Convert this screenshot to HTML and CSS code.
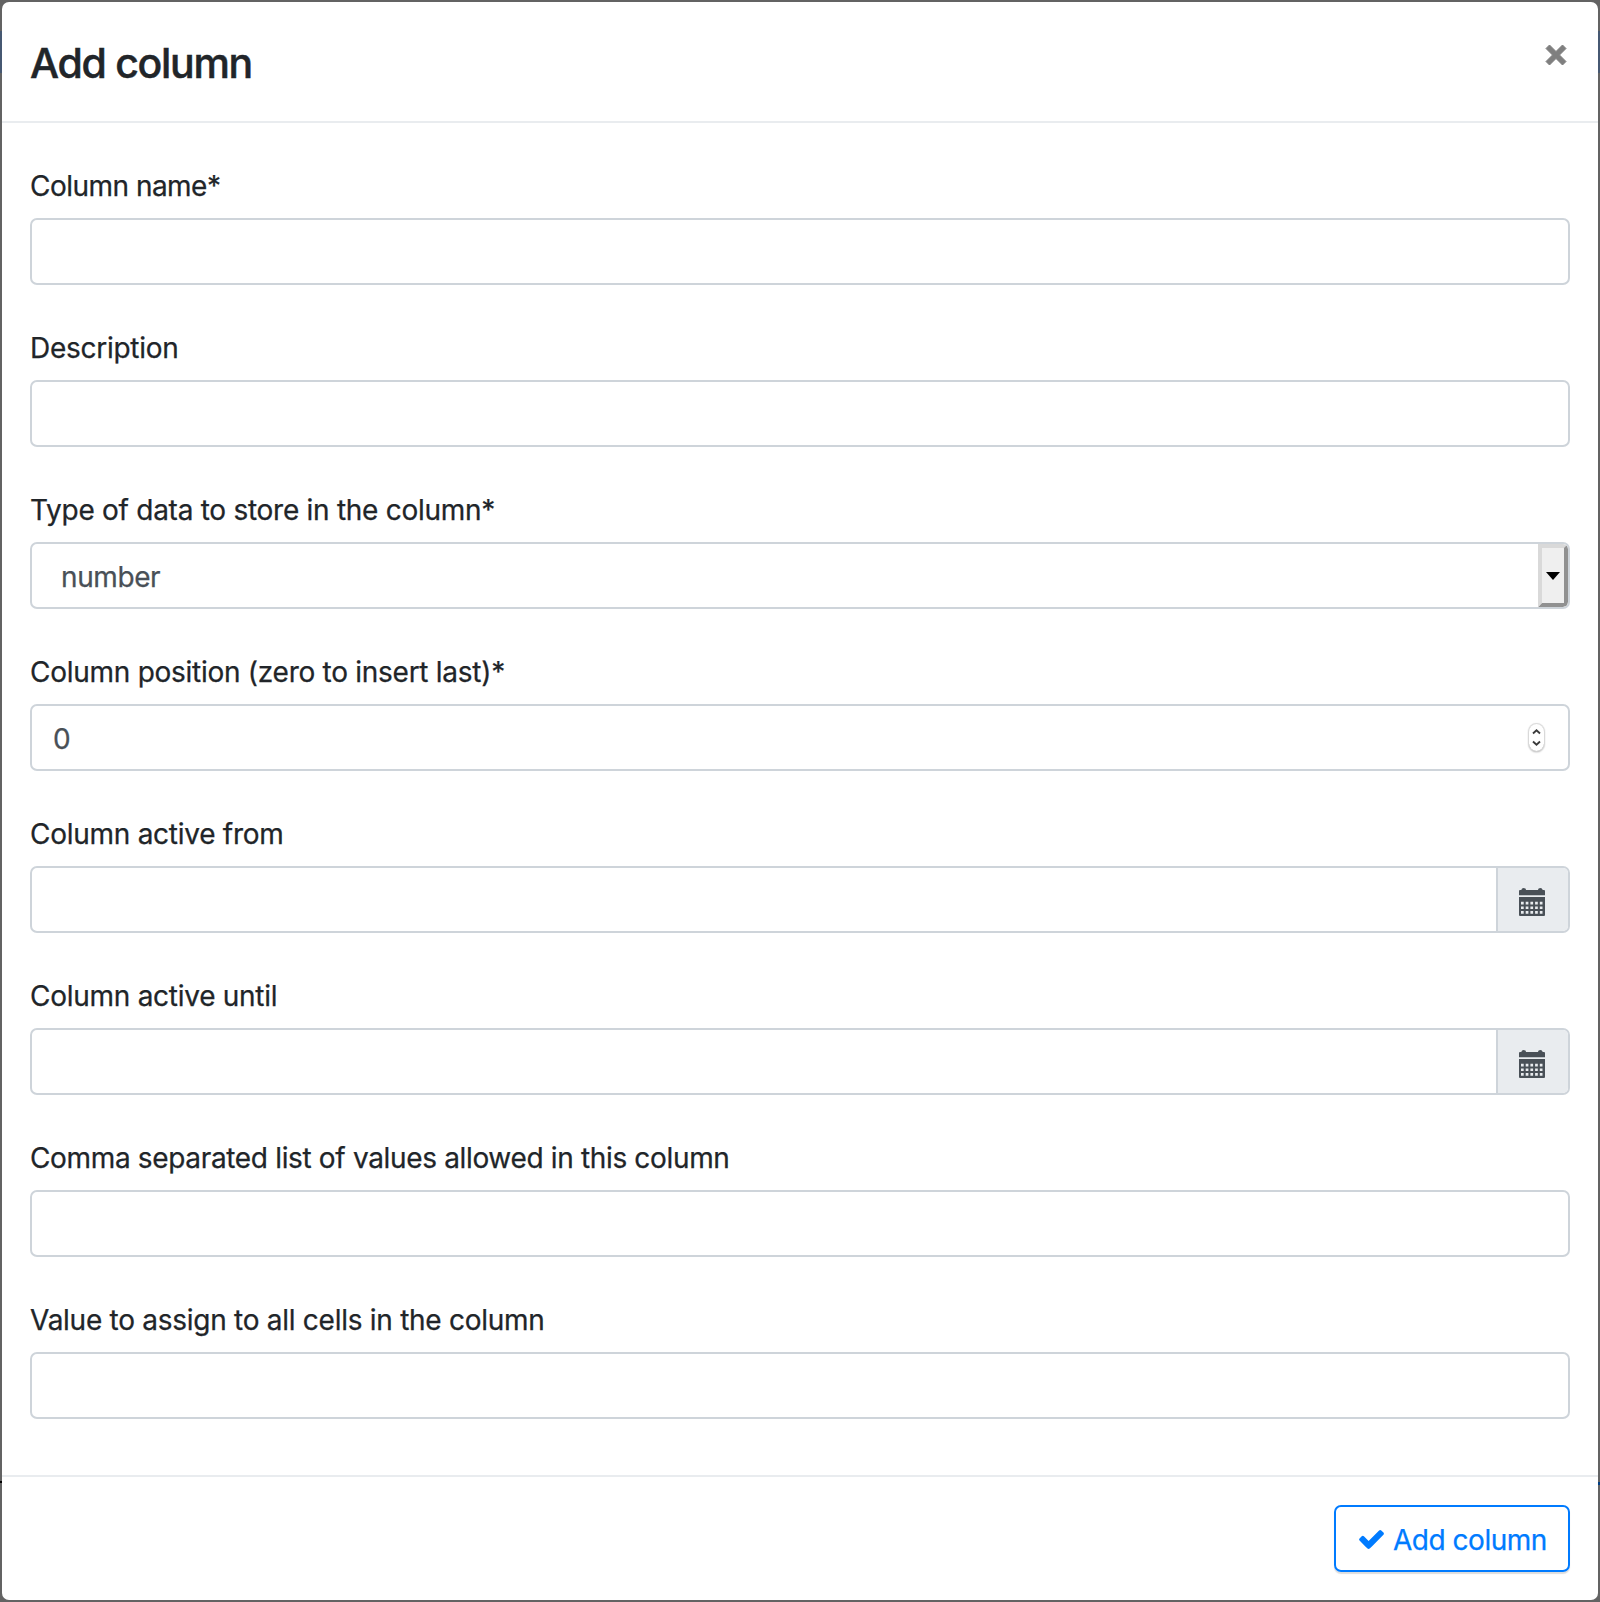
FILE: index.html
```html
<!DOCTYPE html>
<html lang="en">
<head>
<meta charset="utf-8">
<title>Add column</title>
<link rel="stylesheet" href="styles.css">
</head>
<body>
<svg class="defs" width="0" height="0" aria-hidden="true">
  <symbol id="calendar" viewBox="0 0 26 28">
    <path fill="currentColor" fill-rule="evenodd" d="M0 3q0-1 1-1h1.300q.3-2 2.400-2t2.400 2h11.800q.3-2 2.400-2t2.400 2H25q1 0 1 1v4.200H0zM0 9h26v18q0 1-1 1H1q-1 0-1-1zM2 13.800v2.700h2.700v-2.700zm4.700 0v2.700h2.700v-2.700zm4.700 0v2.700h2.700v-2.700zm4.700 0v2.700h2.700v-2.700zm4.700 0v2.700h2.700v-2.700zM2 18.400v2.700h2.700v-2.700zm4.700 0v2.700h2.700v-2.700zm4.700 0v2.700h2.700v-2.700zm4.700 0v2.700h2.700v-2.700zm4.700 0v2.700h2.700v-2.700zM2 23v2.700h2.700V23zm4.700 0v2.700h2.700V23zm4.700 0v2.700h2.700V23zm4.700 0v2.700h2.700V23zm4.700 0v2.700h2.700V23z"/>
  </symbol>
</svg>
<div class="modal">
  <header class="modal-header">
    <h1 class="title">Add column</h1>
    <button class="close" aria-label="Close"><svg width="22" height="22" viewBox="0 0 22 22"><path fill="currentColor" stroke="currentColor" stroke-linejoin="round" stroke-width="1" d="M4.500 1L11 7.500 17.500 1 21 4.500 14.500 11 21 17.500 17.500 21 11 14.500 4.500 21 1 17.500 7.500 11 1 4.500z"/></svg></button>
  </header>
  <main class="modal-body">
    <div class="field"><div class="label tight">Column name*</div><div class="control"></div></div>
    <div class="field"><div class="label">Description</div><div class="control"></div></div>
    <div class="field"><div class="label">Type of data to store in the column*</div>
      <div class="control"><span class="value select-value">number</span><span class="drop"><svg width="14" height="8" viewBox="0 0 14 8"><path d="M0 0h14L7 8z"/></svg></span></div></div>
    <div class="field"><div class="label">Column position (zero to insert last)*</div>
      <div class="control"><span class="value">0</span><span class="spinner"><svg width="15" height="27" viewBox="0 0 15 27" fill="none" stroke="#3c3c3c" stroke-width="1.900"><path d="M4 9.500l3.500-3.200L11 9.500M4 17.500l3.500 3.200 3.500-3.200"/></svg></span></div></div>
    <div class="field"><div class="label">Column active from</div>
      <div class="control"><span class="addon"><svg width="26" height="28"><use href="#calendar"/></svg></span></div></div>
    <div class="field"><div class="label">Column active until</div>
      <div class="control"><span class="addon"><svg width="26" height="28"><use href="#calendar"/></svg></span></div></div>
    <div class="field"><div class="label list-label">Comma separated list of values allowed in this column</div><div class="control"></div></div>
    <div class="field"><div class="label">Value to assign to all cells in the column</div><div class="control"></div></div>
  </main>
  <footer class="modal-footer">
    <button class="submit"><svg width="25" height="19" viewBox="121 334 1550 1188"><path fill="currentColor" d="M1671 566q0 40-28 68l-724 724-136 136q-28 28-68 28t-68-28l-136-136-362-362q-28-28-28-68t28-68l136-136q28-28 68-28t68 28l294 295 656-657q28-28 68-28t68 28l136 136q28 28 28 68z"/></svg><span>Add column</span></button>
  </footer>
</div>
</body>
</html>
```
FILE: styles.css
```css
* { box-sizing: border-box; }
body {
  margin: 0;
  padding: 2px;
  height: 1602px;
  overflow: hidden;
  background:
    linear-gradient(#000, #000) 0 1481px / 2px 2px no-repeat,
    linear-gradient(#003f83, #003f83) 1598px 1482px / 2px 3px no-repeat,
    linear-gradient(#636363 31px, #465872 31px 73px, #636363 73px);
  font-family: Inter, "Liberation Sans", sans-serif;
  font-size: 28px;
  line-height: 42px;
  color: #212529;
  -webkit-text-stroke: .25px currentColor;
}
.defs { position: absolute; }
button { font: inherit; border: 0; padding: 0; background: none; }
.modal {
  display: flex;
  flex-direction: column;
  height: 1598px;
  background: #fff;
  border-radius: 7px;
}
.modal-header {
  display: flex;
  justify-content: space-between;
  align-items: flex-start;
  height: 121px;
  padding: 30px 31px 0 28px;
  border-bottom: 2px solid #e9ecef;
}
.title {
  margin: 4px 0 0;
  font-size: 41px;
  line-height: 54px;
  font-weight: 500;
  letter-spacing: -1.3px;
  -webkit-text-stroke-width: .5px;
}
.close { display: flex; margin-top: 12px; color: #7f7f7f; }
.modal-body { flex: 1; padding: 42px 28px 0; }
.field { height: 162px; }
.label {
  height: 53px;
  white-space: nowrap;
  letter-spacing: -.27px;
}
.tight { letter-spacing: -.52px; }
.list-label { letter-spacing: -.34px; }
.control {
  display: flex;
  align-items: center;
  justify-content: space-between;
  height: 67px;
  border: 2px solid #ced4da;
  border-radius: 7px;
  color: #495057;
  overflow: hidden;
}
.value { padding: 2px 0 0 21px; -webkit-text-stroke-color: #495057; }
.select-value { padding-left: 29px; letter-spacing: -.4px; }
.drop {
  display: flex;
  align-items: center;
  justify-content: center;
  width: 30px;
  height: 63px;
  background: #efefef;
  border: 4px solid;
  border-color: #d9d9d9 #919191 #919191 #d9d9d9;
  border-radius: 0 5px 5px 0;
}
.spinner {
  display: flex;
  width: 15px;
  height: 27px;
  margin: 0 24px 1px 0;
  border-radius: 8px;
  box-shadow: 0 0 1px 1px #d8d8d8, 0 1px 2px #999;
}
.addon {
  display: flex;
  align-items: center;
  justify-content: center;
  width: 72px;
  height: 63px;
  margin-left: auto;
  padding: 5px 2px 0 0;
  background: #e9ecef;
  border-left: 2px solid #ced4da;
}
.modal-footer {
  display: flex;
  justify-content: flex-end;
  height: 125px;
  padding: 28px;
  border-top: 2px solid #e9ecef;
}
.submit {
  display: flex;
  align-items: center;
  gap: 9px;
  width: 236px;
  height: 67px;
  padding: 2px 0 0 23px;
  color: #007bff;
  border: 2px solid #007bff;
  border-radius: 7px;
  box-shadow: 0 2px 1px #ddd;
  letter-spacing: -.48px;
  white-space: nowrap;
  -webkit-text-stroke-color: #007bff;
}
```
